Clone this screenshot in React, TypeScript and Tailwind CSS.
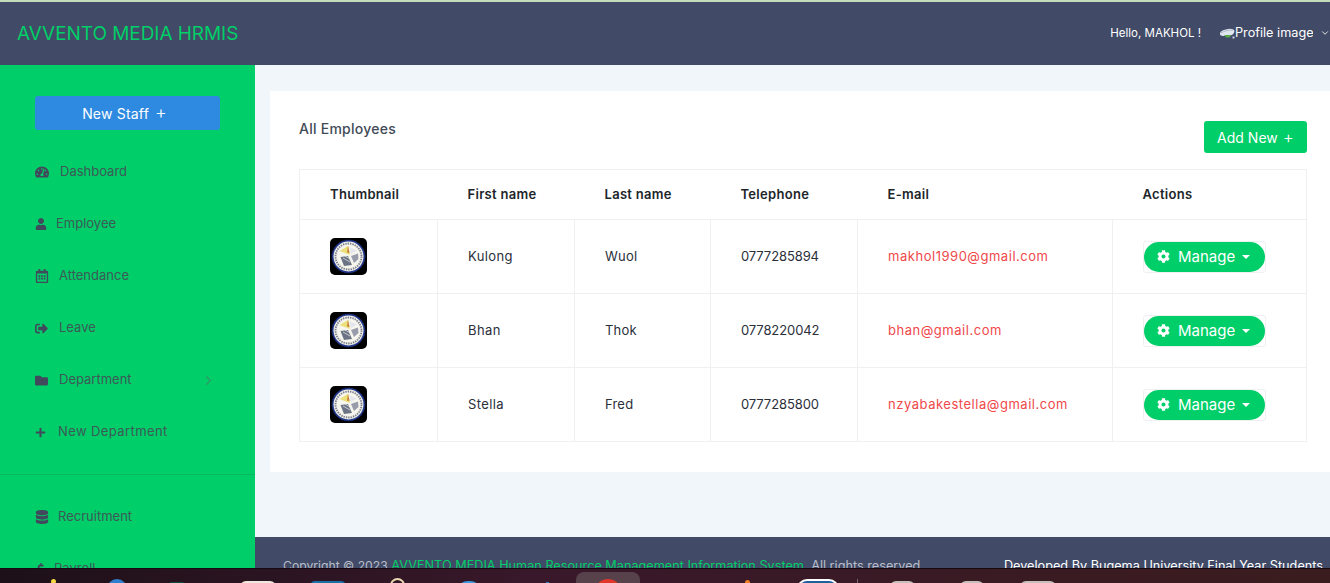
import { FaCog, FaDatabase, FaDollarSign, FaFolder, FaPlus, FaSignOutAlt, FaTachometerAlt, FaUser, FaRegCalendarAlt } from 'react-icons/fa';
import { ChevronDown, ChevronRight } from 'lucide-react';

const employees = [
  { first: 'Kulong', last: 'Wuol', phone: '0777285894', email: 'makhol1990@gmail.com' },
  { first: 'Bhan', last: 'Thok', phone: '0778220042', email: 'bhan@gmail.com' },
  { first: 'Stella', last: 'Fred', phone: '0777285800', email: 'nzyabakestella@gmail.com' },
];

function Seal() {
  return (
    <svg width="37" height="37" viewBox="0 0 37 37" className="block">
      <rect width="37" height="37" rx="5" fill="#000" />
      <circle cx="18.5" cy="18.5" r="16.5" fill="#23398f" strokeDasharray="2 1.5" stroke="#1a2a6c" strokeWidth="1" />
      <circle cx="18.5" cy="18.5" r="15" fill="#f0efe8" />
      <circle cx="18.5" cy="18.5" r="13" fill="none" stroke="#7c7f8c" strokeWidth="1.8" strokeDasharray="1.4 1" />
      <circle cx="18.5" cy="18.5" r="11.4" fill="#f6f5ee" />
      <path d="M18 8 L20 17 L9.5 13 Z" fill="#ebe07a" />
      <path d="M18 7.5 L19.5 15 L17 14.5 Z" fill="#c9803e" />
      <path d="M19.5 9.5 L27 12.5 L21 16 Z" fill="#e3e6ec" />
      <path d="M10.5 19 L18 18 L22 27 L14 28 Z" fill="#6b7384" />
      <path d="M21 18 L28 15.5 L28.5 21 L24 25 Z" fill="#989cab" />
      <path d="M13 20 L20 24 M15 18 L22 22" stroke="#ececec" strokeWidth="0.7" />
    </svg>
  );
}

function NavItem({ icon, label, iconBox, arrow, labelClass }: { icon: React.ReactNode; label: string; iconBox: string; arrow?: boolean; labelClass?: string }) {
  return (
    <div className="h-[52px] flex items-center pl-[35px] pr-[39px] text-[13px] text-[#3d5a58]">
      <span className={`${iconBox} flex items-center text-[#414a5c]`}>{icon}</span>
      <span className={labelClass}>{label}</span>
      {arrow && <ChevronRight size={15} className="ml-auto text-[#2f9a68]" />}
    </div>
  );
}

export default function App() {
  return (
    <div className="h-[583px] w-[1330px] overflow-hidden flex flex-col font-['Inter','Liberation_Sans',sans-serif]">
      <div className="h-[2px] shrink-0 bg-[#c3dcb9]" />
      <header className="h-[63px] shrink-0 bg-[#414a66] flex items-center pl-[17px]">
        <div className="mt-[1px] text-[19px] tracking-[-0.05px] font-normal text-[#00ce68]">AVVENTO MEDIA HRMIS</div>
        <div className="ml-auto flex items-center text-white">
          <span className="text-[11.5px]">Hello, MAKHOL !</span>
          <span className="ml-[18px] flex items-center">
            <svg width="16" height="12" viewBox="0 0 16 12">
              <path d="M1 7 C1 4.5 4 3 7 2.5 C10 1 15 1.5 15.5 4 C15.5 7 12 9 8 9 C4 9 1 9 1 7 Z" fill="#dfe6ee" />
              <path d="M2 6 C5 4 9 3 14 3" stroke="#9aa6b8" strokeWidth="0.7" fill="none" />
              <path d="M5 8 H12 L11 10.5 H7 Z" fill="#5aa84a" />
              <rect x="13.5" y="9.5" width="2" height="2" fill="#cfd6e0" />
            </svg>
            <span className="w-[78px] overflow-hidden whitespace-nowrap text-[12.7px] mb-[2px]">Profile image</span>
          </span>
          <ChevronDown size={10} className="ml-[7px]" />
        </div>
      </header>
      <div className="flex-1 min-h-0 flex overflow-hidden">
        <aside className="w-[255px] shrink-0 bg-[#00ce68]">
          <div className="px-[35px] pt-[31px] pb-[16px]">
            <button className="w-[185px] h-[34px] rounded-[3px] bg-[#2e8ae0] text-white text-[14px] flex items-center justify-center gap-[6px] pr-[6px]">
              <span className="tracking-[0.2px]">New Staff</span>
              <span className="text-[18px] font-light leading-none">+</span>
            </button>
          </div>
          <NavItem iconBox="w-[25px]" label="Dashboard" icon={<FaTachometerAlt size={14} />} />
          <NavItem iconBox="w-[21px]" label="Employee" icon={<FaUser size={12} />} />
          <NavItem iconBox="w-[24px]" label="Attendance" icon={<FaRegCalendarAlt size={14} />} />
          <NavItem iconBox="w-[24px]" label="Leave" icon={<FaSignOutAlt size={13} />} />
          <NavItem iconBox="w-[24px]" label="Department" arrow icon={<FaFolder size={13} />} />
          <NavItem iconBox="w-[23px]" label="New Department" labelClass="tracking-[0.4px]" icon={<FaPlus size={11} />} />
          <div className="h-px bg-[#0bb862] mt-[16px] mb-[16px]" />
          <NavItem iconBox="w-[23px]" label="Recruitment" icon={<FaDatabase size={14} />} />
          <NavItem iconBox="w-[19px]" label="Payroll" icon={<FaDollarSign size={12} />} />
        </aside>
        <main className="flex-1 min-w-0 bg-[#f1f6fa] flex flex-col">
          <div className="h-[472px] shrink-0 pl-[15px] pt-[26px]">
            <section className="h-[381px] bg-white pl-[29px] pr-[23px] pt-[28px]">
              <div className="flex items-start justify-between h-[50px]">
                <h2 className="text-[14px] tracking-[0.25px] font-medium text-[#414a56] leading-[20px]">All Employees</h2>
                <button className="mt-[2px] w-[103px] h-[32px] rounded-[3px] bg-[#00ce68] text-white text-[14px] flex items-center justify-center gap-[5px]">
                  <span>Add New</span>
                  <span className="text-[17px] font-light leading-none">+</span>
                </button>
              </div>
              <table className="w-[1008px] table-fixed border border-[#eef0f2] border-collapse text-[13px] text-[#2b2f3a]">
                <colgroup>
                  <col className="w-[138px]" />
                  <col className="w-[137px]" />
                  <col className="w-[136px]" />
                  <col className="w-[147px]" />
                  <col className="w-[255px]" />
                  <col />
                </colgroup>
                <thead>
                  <tr className="h-[50px] text-left text-[#212529] tracking-[0.3px]">
                    <th className="pl-[30px] font-semibold">Thumbnail</th>
                    <th className="pl-[30px] font-semibold">First name</th>
                    <th className="pl-[30px] font-semibold">Last name</th>
                    <th className="pl-[30px] font-semibold">Telephone</th>
                    <th className="pl-[30px] font-semibold">E-mail</th>
                    <th className="pl-[30px] font-semibold">Actions</th>
                  </tr>
                </thead>
                <tbody>
                  {employees.map((e) => (
                    <tr key={e.email} className="h-[74px] border-t border-[#eef0f2]">
                      <td className="pl-[30px] border-r border-[#eef0f2]"><Seal /></td>
                      <td className="pl-[30px] border-r border-[#eef0f2] tracking-[0.4px]">{e.first}</td>
                      <td className="pl-[30px] border-r border-[#eef0f2] tracking-[0.2px]">{e.last}</td>
                      <td className="pl-[30px] border-r border-[#eef0f2] tracking-[-0.1px]">{e.phone}</td>
                      <td className="pl-[30px] border-r border-[#eef0f2] text-[#f0484a] tracking-[0.53px]">{e.email}</td>
                      <td className="pl-[30px]">
                        <div className="w-[123px] h-[32px] border border-[#eef0f2] rounded-[3px] flex">
                          <button className="flex-1 rounded-full bg-[#00ce68] text-white text-[15px] flex items-center pl-[13px] gap-[8px]">
                            <FaCog size={13} />
                            <span className="mt-[2px]">Manage</span>
                            <span className="-ml-[1px] w-0 h-0 border-x-[4px] border-x-transparent border-t-[4px] border-t-white" />
                          </button>
                        </div>
                      </td>
                    </tr>
                  ))}
                </tbody>
              </table>
            </section>
          </div>
          <footer className="h-[60px] shrink-0 bg-[#414a66] flex items-baseline pl-[28px] pr-[7px] pt-[19px] text-[12.7px]">
            <span className="text-[#b9bec8]"><span className="text-[12.2px]">Copyright © 2023</span> <span className="text-[#00ce68]">AVVENTO MEDIA Human Resource Management Information System</span>. All rights reserved.</span>
            <span className="ml-auto text-white">Developed By Bugema University Final Year Students</span>
          </footer>
        </main>
      </div>
      <div className="h-[15px] shrink-0 relative overflow-hidden bg-[linear-gradient(90deg,#1d1018,#38182a_40%,#3b1c1e)] border-t border-[#16090f]">
        <div className="absolute left-[576px] top-[3px] w-[64px] h-[20px] rounded-[8px] bg-[#57414b]" />
        <div className="absolute left-[51px] top-[10px] w-[5px] h-[5px] rounded-full bg-[#f5d840]" />
        <div className="absolute left-[107px] top-[10px] w-[20px] h-[12px] rounded-t-[10px] bg-[#2f7fd0]" />
        <div className="absolute left-[169px] top-[13px] w-[16px] h-[6px] rounded-t-[3px] bg-[#0f4a3e]" />
        <div className="absolute left-[240px] top-[12px] w-[36px] h-[8px] rounded-t-[6px] bg-[#efe8dc]" />
        <div className="absolute left-[310px] top-[12px] w-[36px] h-[8px] rounded-t-[5px] bg-[#1a6fa8]" />
        <div className="absolute left-[390px] top-[9px] w-[15px] h-[15px] rounded-full border-[2px] border-[#e8d8b0]" />
        <div className="absolute left-[456px] top-[12px] w-[26px] h-[12px] rounded-t-[13px] bg-[#3a9ae0]" />
        <div className="absolute left-[546px] top-[13px] w-[3px] h-[4px] bg-[#2f7fd0]" />
        <div className="absolute left-[594px] top-[10px] w-[28px] h-[14px] rounded-t-[14px] bg-[#e0352b]" />
        <div className="absolute left-[745px] top-[11px] w-[5px] h-[6px] rounded-t-[3px] bg-[#f0801e]" />
        <div className="absolute left-[797px] top-[10px] w-[42px] h-[10px] rounded-t-[10px] border-t-[2px] border-x-[2px] border-white bg-[#1f5f9f]" />
        <div className="absolute left-[857px] top-[10px] w-px h-[6px] bg-[#7a666c]" />
        <div className="absolute left-[890px] top-[12px] w-[25px] h-[8px] rounded-t-[6px] bg-[#c4c0bc]" />
        <div className="absolute left-[960px] top-[12px] w-[24px] h-[8px] rounded-t-[6px] bg-[#c4c0bc]" />
        <div className="absolute left-[1020px] top-[12px] w-[36px] h-[8px] rounded-t-[6px] bg-[#c4c0bc]" />
      </div>
    </div>
  );
}
